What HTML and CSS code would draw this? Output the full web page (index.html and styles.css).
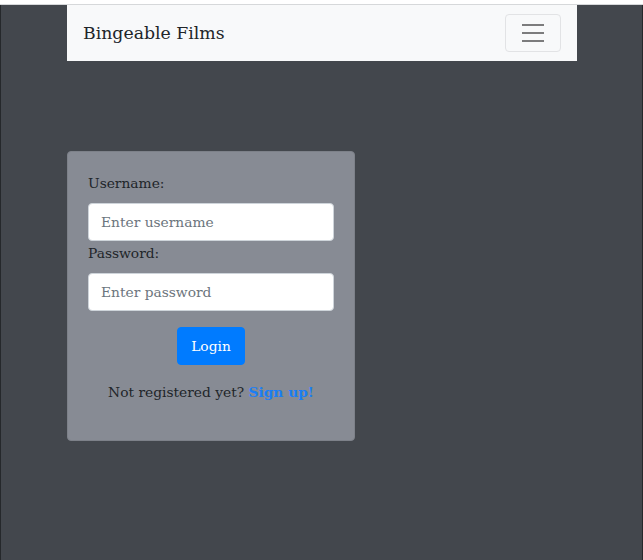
FILE: index.html
```html
<!DOCTYPE html>
<html>
<head>
<meta charset="utf-8">
<link rel="stylesheet" href="styles.css">
</head>
<body>
<div class="topstrip"></div>
<div class="page">
  <div class="container">
    <nav class="navbar">
      <span class="brand">Bingeable Films</span>
      <button class="toggler" type="button" aria-label="Toggle navigation">
        <svg width="30" height="30" viewBox="0 0 30 30">
          <path d="M4 7h22M4 15h22M4 23h22" stroke="rgba(0,0,0,0.5)" stroke-width="2" stroke-linecap="butt"/>
        </svg>
      </button>
    </nav>
    <form class="card">
      <label class="label" for="u">Username:</label>
      <input class="input" id="u" type="text" placeholder="Enter username">
      <label class="label" for="p">Password:</label>
      <input class="input" id="p" type="password" placeholder="Enter password">
      <div class="actions"><button class="btn" type="button">Login</button></div>
      <p class="signup">Not registered yet? <a href="#" class="link">Sign up!</a></p>
    </form>
  </div>
</div>
</body>
</html>
```

FILE: styles.css
```css
html, body {
  margin: 0;
  padding: 0;
  height: 100%;
}
body {
  font-family: "DejaVu Serif", Georgia, serif;
  font-size: 13.8px;
  color: #212529;
  background: #ffffff;
  display: flex;
  flex-direction: column;
}
.topstrip {
  height: 4px;
  background: #ffffff;
  border-bottom: 1px solid #d6d8da;
}
.page {
  flex: 1;
  background: #43474d;
  border-left: 1px solid #25282b;
  border-right: 1px solid #25282b;
}
.container {
  width: 510px;
  margin: 0 auto;
  padding-left: 1px;
}
.navbar {
  height: 56px;
  background: #f8f9fa;
  display: flex;
  align-items: center;
  justify-content: space-between;
  padding: 0 16px;
}
.brand {
  font-size: 17.3px;
  color: #212529;
}
.toggler {
  width: 56px;
  height: 38px;
  background: transparent;
  border: 1px solid #e2e3e5;
  border-radius: 4px;
  display: flex;
  align-items: center;
  justify-content: center;
  padding: 0;
}
.card {
  width: 246px;
  margin-top: 90px;
  background: #878b94;
  border: 1px solid #7d8189;
  border-radius: 4px;
  padding: 20px 20px 20px;
  display: flex;
  flex-direction: column;
}
.label {
  line-height: 22px;
  margin-bottom: 9px;
  color: #212529;
}
.input {
  box-sizing: border-box;
  height: 38px;
  width: 100%;
  border: 1px solid #ced4da;
  border-radius: 4px;
  background: #fff;
  padding: 0 12px;
  font-family: inherit;
  font-size: 13.8px;
  color: #495057;
  margin-bottom: 1px;
}
.input::placeholder {
  color: #6c757d;
}
.actions {
  display: flex;
  justify-content: center;
  margin-top: 15px;
}
.btn {
  height: 38px;
  padding: 0 13px;
  background: #007bff;
  color: #fff;
  border: 1px solid #007bff;
  border-radius: 4px;
  font-family: inherit;
  font-size: 13.8px;
}
.signup {
  margin: 15px 0 16px;
  line-height: 24px;
  text-align: center;
}
.link {
  color: #1a7ef5;
  font-weight: bold;
  text-decoration: none;
}
```
